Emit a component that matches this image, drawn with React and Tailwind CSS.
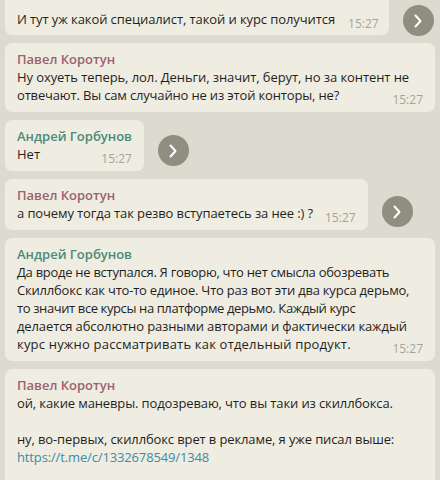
import React from "react";

const font = { fontFamily: '"Open Sans", "Noto Sans", sans-serif' };

function Fwd({ mb = "mb-[4px]" }) {
  return (
    <div className={"w-[31px] h-[31px] rounded-full bg-[#8f8e80] flex items-center justify-center shrink-0 ml-[14px] " + mb}>
      <svg width="10" height="14" viewBox="0 0 10 14" fill="none">
        <path d="M2.5 1.5 L7.5 7 L2.5 12.5" stroke="#ffffff" strokeWidth="2" strokeLinecap="round" strokeLinejoin="round" />
      </svg>
    </div>
  );
}

function Time({ ml = "ml-3" }) {
  return (
    <span className={"text-[12px] leading-[13px] text-[#a4a398] whitespace-nowrap shrink-0 mb-[-2px] " + ml}>15:27</span>
  );
}

function Name({ children, color }) {
  return <div className={"leading-[18px] text-[13px] font-semibold " + color}>{children}</div>;
}

const PAVEL = "text-[#9a6170]";
const ANDREY = "text-[#4b8a77]";

export default function App() {
  return (
    <div className="w-[440px] h-[480px] overflow-hidden bg-[#dddbd0] text-[13px] leading-[18px] text-[#1f1f1f]" style={font}>
      <div className="flex flex-col gap-2 -mt-[7px]">
        {/* Message 1 */}
        <div className="flex items-end pl-[5px]">
          <div className="bg-[#efede2] rounded-[7px] pl-3 pr-[10px] pt-[17px] pb-[7px]">
            <div className="flex items-end">
              <span className="whitespace-nowrap tracking-[-0.09px]">И тут уж какой специалист, такой и курс получится</span>
              <Time ml="ml-[13px]" />
            </div>
          </div>
          <Fwd mb="mb-[-1px]" />
        </div>

        {/* Message 2 */}
        <div className="flex items-end pl-[5px]">
          <div className="w-[430px] bg-[#efede2] rounded-[7px] px-3 pt-[7px] pb-2">
            <Name color={PAVEL}>Павел Коротун</Name>
            <div className="whitespace-nowrap tracking-[-0.085px]">Ну охуеть теперь, лол. Деньги, значит, берут, но за контент не</div>
            <div className="flex items-end justify-between">
              <span className="whitespace-nowrap tracking-[-0.16px]">отвечают. Вы сам случайно не из этой конторы, не?</span>
              <Time />
            </div>
          </div>
        </div>

        {/* Message 3 */}
        <div className="flex items-end pl-[5px]">
          <div className="bg-[#efede2] rounded-[7px] px-3 pt-[7px] pb-2">
            <Name color={ANDREY}>Андрей Горбунов</Name>
            <div className="flex items-end justify-between">
              <span className="whitespace-nowrap">Нет</span>
              <Time />
            </div>
          </div>
          <Fwd mb="mb-[5px]" />
        </div>

        {/* Message 4 */}
        <div className="flex items-end pl-[5px]">
          <div className="bg-[#efede2] rounded-[7px] px-3 pt-[7px] pb-2">
            <Name color={PAVEL}>Павел Коротун</Name>
            <div className="flex items-end justify-between">
              <span className="whitespace-nowrap tracking-[-0.11px]">а почему тогда так резво вступаетесь за нее :) ?</span>
              <Time />
            </div>
          </div>
          <Fwd mb="mb-[3px]" />
        </div>

        {/* Message 5 */}
        <div className="flex items-end pl-[5px]">
          <div className="w-[430px] bg-[#efede2] rounded-[7px] px-3 pt-[7px] pb-2">
            <Name color={ANDREY}>Андрей Горбунов</Name>
            <div className="whitespace-nowrap tracking-[-0.28px]">Да вроде не вступался. Я говорю, что нет смысла обозревать</div>
            <div className="whitespace-nowrap tracking-[-0.21px]">Скиллбокс как что-то единое. Что раз вот эти два курса дерьмо,</div>
            <div className="whitespace-nowrap tracking-[-0.39px]">то значит все курсы на платформе дерьмо. Каждый курс</div>
            <div className="whitespace-nowrap tracking-[-0.12px]">делается абсолютно разными авторами и фактически каждый</div>
            <div className="flex items-end justify-between">
              <span className="whitespace-nowrap tracking-[0.19px]">курс нужно рассматривать как отдельный продукт.</span>
              <Time />
            </div>
          </div>
        </div>

        {/* Message 6 */}
        <div className="flex items-end pl-[5px]">
          <div className="w-[430px] bg-[#efede2] rounded-[7px] px-3 pt-[7px] pb-8">
            <Name color={PAVEL}>Павел Коротун</Name>
            <div className="whitespace-nowrap tracking-[-0.12px]">ой, какие маневры. подозреваю, что вы таки из скиллбокса.</div>
            <div className="h-[18px]" />
            <div className="whitespace-nowrap tracking-[-0.12px]">ну, во-первых, скиллбокс врет в рекламе, я уже писал выше:</div>
            <div className="whitespace-nowrap tracking-[-0.14px] text-[#3a8ca5]">https://t.me/c/1332678549/1348</div>
          </div>
        </div>
      </div>
    </div>
  );
}
